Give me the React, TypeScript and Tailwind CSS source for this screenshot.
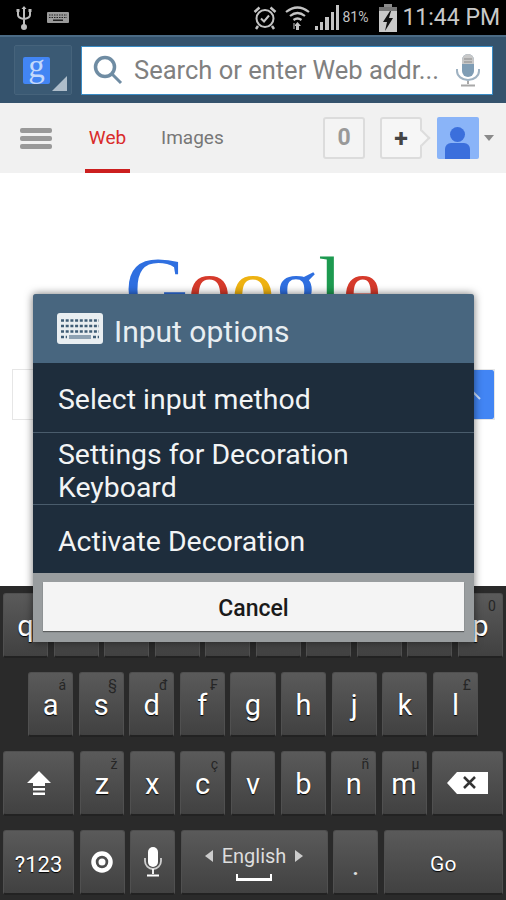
import React from 'react';

const roboto = { fontFamily: 'Roboto, sans-serif' };

const UsbIcon = () => (
  <svg width="16" height="25" viewBox="0 0 16 25" fill="none" stroke="#bdbdbd" strokeWidth="2">
    <path d="M8 2v20M2 6v4q0 3 6 4q6-1 6-4V6" />
    <circle cx="8" cy="22" r="2" fill="#bdbdbd" />
    <rect x="0.5" y="4" width="3" height="3" fill="#bdbdbd" stroke="none" />
    <rect x="12.5" y="4" width="3" height="3" fill="#bdbdbd" stroke="none" />
    <path d="M5.5 4L8 1l2.5 3z" fill="#bdbdbd" stroke="none" />
  </svg>
);

const KeyboardSmall = () => (
  <svg width="22" height="11" viewBox="0 0 22 11">
    <rect width="22" height="11" rx="1" fill="#9a9a9a" />
    <path d="M2 3h18M2 5.500h18" stroke="#222" strokeWidth="1" strokeDasharray="1.500 1" />
    <rect x="6" y="7.500" width="10" height="1.500" fill="#222" />
  </svg>
);

const AlarmIcon = () => (
  <svg width="24" height="25" viewBox="0 0 24 25" fill="none" stroke="#c4c4c4" strokeWidth="2">
    <circle cx="12" cy="13.500" r="8.500" />
    <path d="M8 13.500l3 3 5-6" />
    <path d="M1.500 7l5-4.500M22.500 7l-5-4.500M5 21l-2 3M19 21l2 3" strokeWidth="2.500" />
  </svg>
);

const WifiIcon = () => (
  <svg width="25" height="26" viewBox="0 0 25 26" fill="none" stroke="#c4c4c4" strokeWidth="2.200">
    <path d="M1 7q11.500-9 23 0M5 11q7.500-6 15 0M8.500 15q4-3 8 0" />
    <path d="M12.500 17l3.500 4h-2v4h-3v-4H9z" fill="#c4c4c4" stroke="none" />
    <path d="M9 18v6" stroke="#666" strokeWidth="2" />
  </svg>
);

const SignalIcon = () => (
  <svg width="24" height="25" viewBox="0 0 24 25" fill="#c4c4c4">
    <rect x="0" y="21" width="3" height="4" />
    <rect x="5" y="17" width="3" height="8" />
    <rect x="10" y="12" width="4" height="13" />
    <rect x="16" y="7" width="3" height="18" />
    <rect x="21" y="0" width="3" height="25" />
  </svg>
);

const BatteryIcon = () => (
  <svg width="18" height="28" viewBox="0 0 18 28">
    <rect x="5" y="0" width="8" height="4" fill="#8c8c8c" />
    <rect x="0" y="3" width="18" height="25" fill="#c9c9c9" />
    <rect x="0" y="3" width="18" height="4" fill="#777" />
    <path d="M11 7L4 18h4l-2 9 8-13h-4l2-7z" fill="#111" />
  </svg>
);

const SearchIcon = () => (
  <svg width="30" height="30" viewBox="0 0 30 30" fill="none" stroke="#6f8ca3" strokeWidth="3.500">
    <circle cx="12" cy="12" r="9.500" />
    <path d="M19 19l9 9" strokeWidth="3" />
  </svg>
);

const VoiceIcon = () => (
  <svg width="24" height="34" viewBox="0 0 24 34" fill="none">
    <rect x="6" y="1" width="12" height="23" rx="6" fill="#7f9db5" />
    <path d="M6 7a6 6 0 0112 0v4H6z" fill="#c8c8c8" />
    <path d="M8 6h8M8 9h8" stroke="#8a8a8a" strokeWidth="1" />
    <path d="M1 16v2a11 9 0 0022 0v-2" stroke="#9fb2c2" strokeWidth="2" />
    <path d="M12 28v3M5 32.500h14" stroke="#a8a8a8" strokeWidth="2" />
  </svg>
);

const KeyboardLarge = () => (
  <svg width="46" height="31" viewBox="0 0 46 31">
    <rect width="46" height="31" rx="3" fill="#e9eef1" />
    <g stroke="#3f5d76" strokeWidth="2.500" strokeDasharray="3 1.700">
      <path d="M4 7.500h38M4 13h38M4 18.500h38M4 24h6M36 24h6" />
    </g>
    <rect x="12" y="22" width="22" height="4" fill="#8ea2b3" />
  </svg>
);

const ShiftIcon = () => (
  <svg width="24" height="25" viewBox="0 0 24 25" fill="#fff">
    <path d="M12 0l12 12h-6v3H6v-3H0z" />
    <rect x="6" y="17" width="12" height="2.500" />
    <rect x="6" y="21.500" width="12" height="2.500" />
  </svg>
);

const DeleteIcon = () => (
  <svg width="41" height="22" viewBox="0 0 41 22">
    <path d="M0 11L10 0h31v22H10z" fill="#fff" />
    <path d="M17 5l11 11M28 5L17 16" stroke="#333" strokeWidth="2.500" />
  </svg>
);

const GearIcon = () => (
  <svg width="22" height="22" viewBox="0 0 22 22" fill="none">
    <circle cx="11" cy="11" r="8.500" stroke="#fff" strokeWidth="4.500" />
    <circle cx="11" cy="11" r="3.500" fill="#fff" />
  </svg>
);

const MicIcon = () => (
  <svg width="18" height="30" viewBox="0 0 18 30" fill="none">
    <rect x="4" y="0" width="10" height="20" rx="5" fill="#fff" />
    <path d="M1 11v3a8 8 0 0016 0v-3" stroke="#d0d0d0" strokeWidth="1.800" />
    <path d="M9 22v5M3 28.500h12" stroke="#fff" strokeWidth="1.800" />
  </svg>
);

const Key = ({ label, hint, className = 'flex-1', children }: { label?: string; hint?: string; className?: string; children?: React.ReactNode }) => (
  <div className={`relative flex h-[65px] items-center justify-center rounded-[3px] border border-b-2 border-[#505050] border-b-[#222] bg-gradient-to-b from-[#5a5a5a] to-[#414141] text-white ${className}`}>
    {hint && <span className="absolute right-[6px] top-[4px] text-[14px] leading-[17px] text-[#262626]">{hint}</span>}
    {label && <span className="pt-[2px] text-[29px] leading-none [text-shadow:0_1px_1px_#000]">{label}</span>}
    {children}
  </div>
);

// only q and p of the top row stick out from under the dialog
const rowOne = [['q', ''], ['', ''], ['', ''], ['', ''], ['', ''], ['', ''], ['', ''], ['', ''], ['', ''], ['p', '0']];
const rowTwo = [['a', 'á'], ['s', '§'], ['d', 'đ'], ['f', '₣'], ['g', ''], ['h', ''], ['j', ''], ['k', ''], ['l', '£']];
const rowThree = [['z', 'ž'], ['x', ''], ['c', 'ç'], ['v', ''], ['b', ''], ['n', 'ñ'], ['m', 'µ']];

export default function App() {
  return (
    <div className="relative flex h-[900px] w-[506px] flex-col overflow-hidden bg-white" style={roboto}>
      {/* status bar */}
      <div className="flex h-[35px] items-center bg-black pl-[16px] pr-[6px]">
        <UsbIcon />
        <div className="ml-[15px]"><KeyboardSmall /></div>
        <div className="ml-auto flex items-center">
          <AlarmIcon />
          <div className="ml-[8px]"><WifiIcon /></div>
          <div className="ml-[5px]"><SignalIcon /></div>
          <span className="ml-[3px] w-[32px] text-[14px] text-[#c4c4c4]">81%</span>
          <div className="ml-[5px]"><BatteryIcon /></div>
          <span className="ml-[5px] text-[23px] leading-none text-[#c9c9c9]">11:44 PM</span>
        </div>
      </div>

      {/* browser toolbar */}
      <div className="flex h-[68px] items-center gap-[9px] border-t-2 border-[#4b6b85] bg-[#35536d] pl-[14px] pr-[13px]">
        <div className="relative flex h-[50px] w-[58px] items-center rounded-[2px] border border-[#46637b] bg-[#3b5a74] pl-[8px]">
          <div className="flex h-[27px] w-[27px] items-center justify-center rounded-[2px] bg-[#4285f4] pb-[8px] text-[33px] leading-none text-[#c4d9fb]" style={{ fontFamily: '"Liberation Serif", serif' }}>g</div>
          <div className="absolute bottom-[3px] right-[4px] h-0 w-0 border-b-[15px] border-l-[15px] border-b-[#aebdca] border-l-transparent" />
        </div>
        <div className="flex h-[49px] flex-1 items-center border border-[#3a8cc5] bg-white pl-[11px] pr-[12px]">
          <SearchIcon />
          <span className="ml-[11px] whitespace-nowrap pt-[2px] text-[25.500px] leading-none text-[#808080]">Search or enter Web addr...</span>
          <div className="ml-auto"><VoiceIcon /></div>
        </div>
      </div>

      {/* google bar */}
      <div className="flex h-[70px] items-center bg-[#f1f1f1] pl-[20px] pr-[12px]">
        <div className="flex w-[32px] flex-col gap-[3px]">
          <div className="h-[5px] rounded-[2px] bg-[#999]" />
          <div className="h-[5px] rounded-[2px] bg-[#999]" />
          <div className="h-[5px] rounded-[2px] bg-[#999]" />
        </div>
        <div className="ml-[33px] flex h-full w-[45px] items-center justify-center border-b-4 border-[#cc1f1f] pt-[4px] text-[19px] text-[#d92b2b]">Web</div>
        <span className="ml-[31px] text-[19px] text-[#777]">Images</span>
        <div className="ml-auto flex items-center">
          <div className="flex h-[42px] w-[42px] items-center justify-center rounded-[3px] border-2 border-[#dcdcdc] bg-[#f4f4f4] text-[23px] font-bold text-[#999]">0</div>
          <div className="relative ml-[15px] flex h-[42px] w-[42px] items-center justify-center rounded-[3px] border-2 border-[#dcdcdc] bg-[#f6f6f6] text-[25px] font-bold leading-none text-[#444]">
            +
            <div className="absolute right-[-8px] top-[13px] h-[12px] w-[12px] rotate-45 border-r-2 border-t-2 border-[#dcdcdc] bg-[#f6f6f6]" />
          </div>
          <div className="relative ml-[15px] h-[42px] w-[42px] overflow-hidden rounded-[2px] bg-[#8ab4f8]">
            <div className="absolute left-[13px] top-[10px] h-[15px] w-[15px] rounded-full bg-[#3b6fdc]" />
            <div className="absolute left-[8px] top-[26px] h-[16px] w-[25px] rounded-t-[6px] bg-[#3b6fdc]" />
          </div>
          <div className="ml-[5px] h-0 w-0 border-x-[5px] border-t-[6px] border-x-transparent border-t-[#8a8a8a]" />
        </div>
      </div>

      {/* page content, mostly covered by the dialog */}
      <div className="flex-1 overflow-hidden bg-white pt-[67px]">
        <div className="flex h-[129px] justify-center text-[87px] leading-[96px]" style={{ fontFamily: '"Liberation Serif", serif' }}>
          <span className="text-[#2f6fe0]">G</span>
          <span className="text-[#d63a2b]">o</span>
          <span className="text-[#eeb211]">o</span>
          <span className="text-[#2f6fe0]">g</span>
          <span className="text-[#1d9a50]">l</span>
          <span className="text-[#d63a2b]">e</span>
        </div>
        <div className="mx-[12px] flex h-[51px] w-[483px] border border-[#e6e6e6]">
          <div className="flex-1" />
          <div className="flex w-[60px] items-center justify-end rounded-r-[2px] bg-[#4285f4] pr-[12px]">
            <svg width="12" height="12" viewBox="0 0 12 12" stroke="#cfe0fb" strokeWidth="2"><path d="M2 2l8 8" /></svg>
          </div>
        </div>
      </div>

      {/* keyboard */}
      <div className="flex h-[314px] flex-col gap-[14px] bg-[#2a2a2a] pt-[7px]">
        <div className="flex gap-[5.500px] px-[3px]">
          {rowOne.map(([k, h], i) => <Key key={i} label={k} hint={h} />)}
        </div>
        <div className="flex gap-[5.500px] px-[28px]">
          {rowTwo.map(([k, h]) => <Key key={k} label={k} hint={h} />)}
        </div>
        <div className="flex gap-[5.500px] px-[3px]">
          <Key className="w-[71px]"><ShiftIcon /></Key>
          {rowThree.map(([k, h]) => <Key key={k} label={k} hint={h} />)}
          <Key className="w-[71px]"><DeleteIcon /></Key>
        </div>
        <div className="flex gap-[5.500px] px-[3px]">
          <Key className="w-[71px]"><span className="pt-[5px] text-[22px] leading-none [text-shadow:0_1px_1px_#000]">?123</span></Key>
          <Key className="w-[45px]"><GearIcon /></Key>
          <Key className="w-[45px]"><MicIcon /></Key>
          <Key className="w-[147px] flex-col">
            <div className="flex items-center gap-[9px] text-[20px] leading-[24px] text-[#ddd]">
              <span className="h-0 w-0 border-y-[6px] border-r-[8px] border-y-transparent border-r-[#ccc]" />
              English
              <span className="h-0 w-0 border-y-[6px] border-l-[8px] border-y-transparent border-l-[#ccc]" />
            </div>
            <div className="mt-[6px] h-[7px] w-[36px] border-x-2 border-b-[3px] border-white" />
          </Key>
          <Key className="w-[45px]"><span className="mt-[14px] text-[21px] font-bold text-[#ddd]">.</span></Key>
          <Key><span className="pt-[5px] text-[21px] leading-none [text-shadow:0_1px_1px_#000]">Go</span></Key>
        </div>
      </div>

      {/* input options dialog */}
      <div className="absolute left-[33px] top-[294px] w-[441px] rounded-t-[3px] bg-[#999d9f] shadow-[0_0_8px_rgba(0,0,0,0.55)]">
        <div className="flex h-[69px] items-center rounded-t-[3px] bg-[#48667f] pl-[24px] text-[30px] text-[#e8eef2]">
          <KeyboardLarge />
          <span className="ml-[11px] mt-[6px]">Input options</span>
        </div>
        <div className="bg-[#1e2d3c] text-[28.400px] text-[#f2f4f5]">
          <div className="flex h-[70px] items-center border-b border-[#4a5c6c] pl-[25px] pt-[6px]">Select input method</div>
          <div className="flex h-[72px] items-center border-b border-[#4a5c6c] pl-[25px] pt-[4px] leading-[33px]">Settings for Decoration<br />Keyboard</div>
          <div className="flex h-[68px] items-center pl-[25px] pt-[6px]">Activate Decoration</div>
        </div>
        <div className="px-[10px] pb-[11px] pt-[9px]">
          <div className="flex h-[49px] items-center justify-center bg-[#f4f4f4] pt-[6px] text-[23px] font-medium text-[#1a1a1a] shadow-[0_1px_1px_rgba(0,0,0,0.4)]">Cancel</div>
        </div>
      </div>
    </div>
  );
}
